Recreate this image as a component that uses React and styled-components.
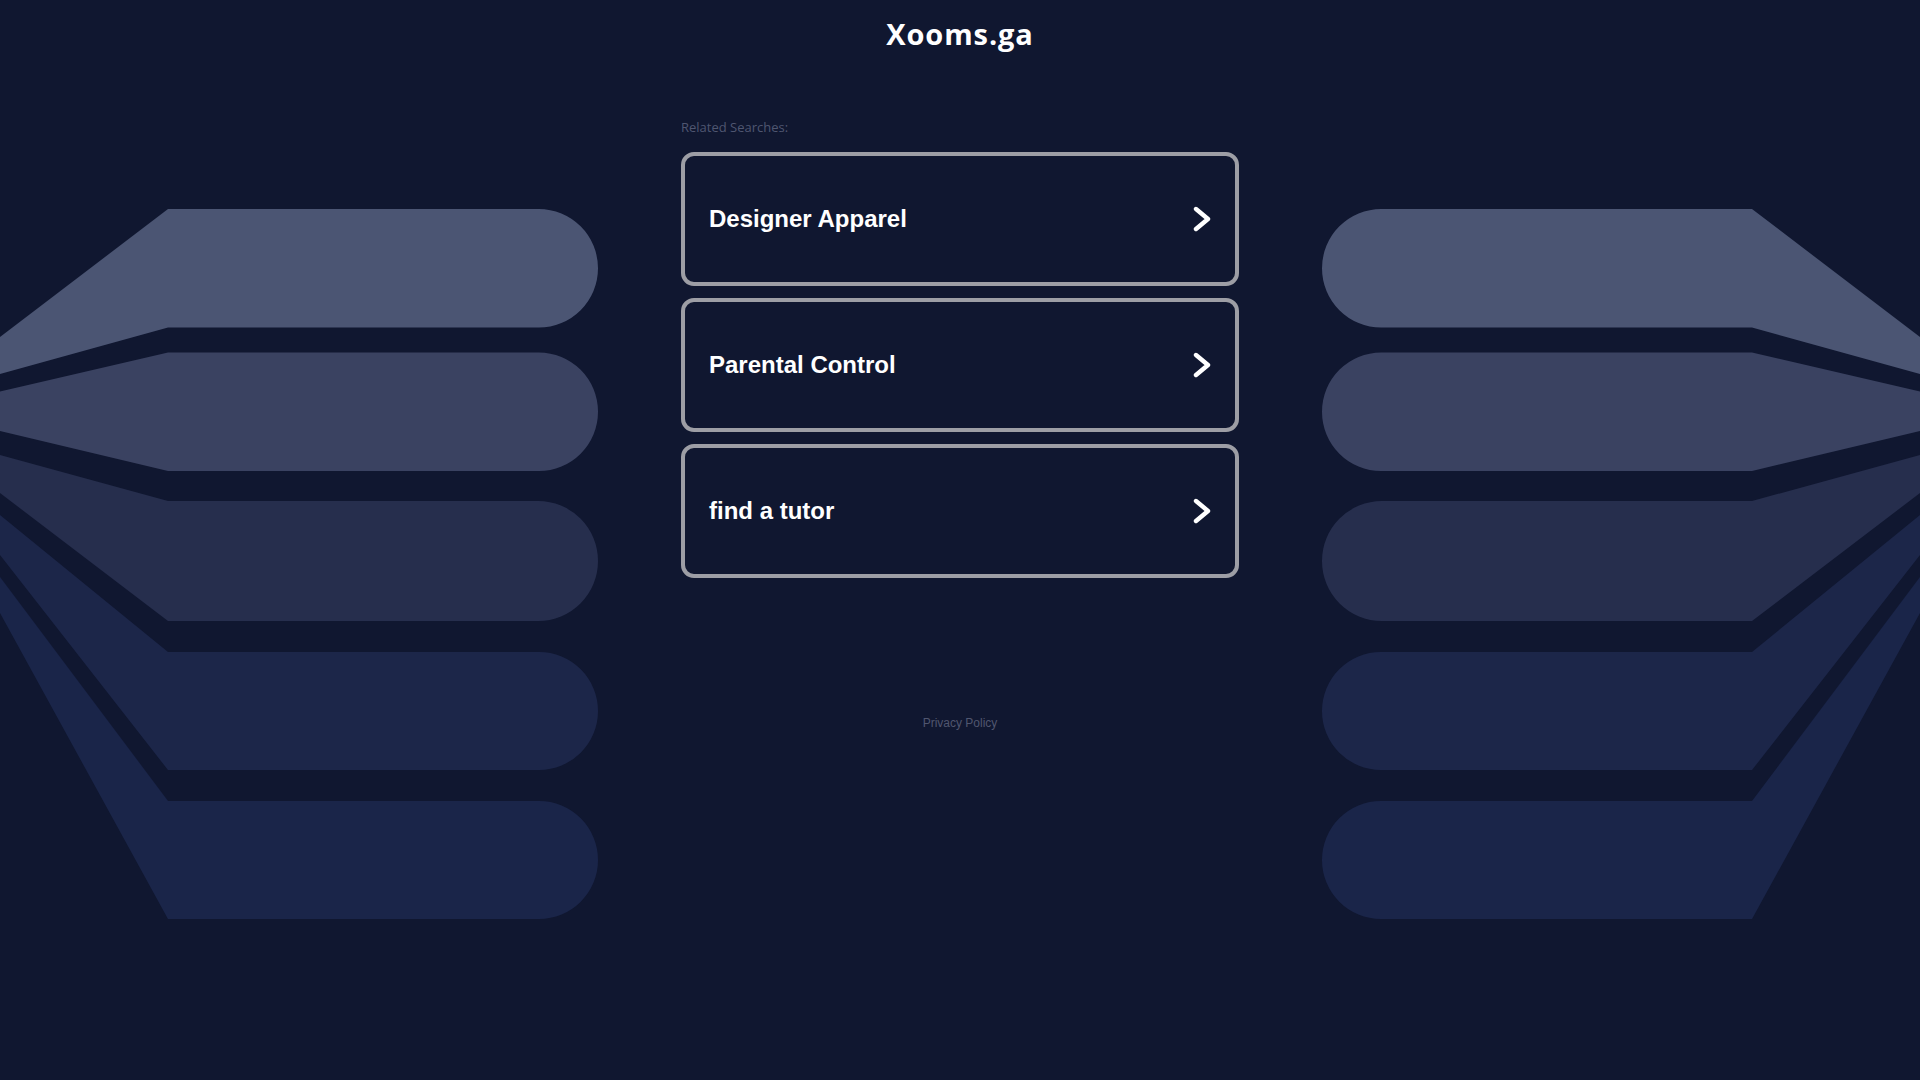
import React from "react";
import styled, { createGlobalStyle } from "styled-components";

const GlobalStyle = createGlobalStyle`
  html, body {
    margin: 0;
    padding: 0;
    background-color: #101730;
  }
  body {
    font-family: "Liberation Sans", Arial, sans-serif;
  }
`;

const Page = styled.div`
  display: flex;
  justify-content: center;
  width: 100%;
  min-height: 1080px;
  overflow: hidden;
`;

const Art = styled.svg`
  flex: 0 0 598px;
  width: 598px;
  height: 930px;
  display: block;
`;

const Main = styled.main`
  flex: 0 0 724px;
  box-sizing: border-box;
  padding: 0 83px;
  display: flex;
  flex-direction: column;
`;

const Title = styled.h1`
  margin: 14px 0 0;
  height: 40px;
  line-height: 40px;
  text-align: center;
  color: #ffffff;
  font-family: "Open Sans", sans-serif;
  font-weight: 700;
  font-size: 29px;
  letter-spacing: 0.9px;
`;

const Label = styled.div`
  margin-top: 64px;
  line-height: 18px;
  font-family: "Open Sans", sans-serif;
  font-size: 13px;
  color: #4f5670;
`;

const List = styled.div`
  margin-top: 16px;
  display: flex;
  flex-direction: column;
  gap: 12px;
`;

const Card = styled.a`
  box-sizing: border-box;
  height: 134px;
  display: flex;
  align-items: center;
  justify-content: space-between;
  padding: 0 24px 0 24px;
  border: 4px solid #9d9ea5;
  border-radius: 13px;
  color: #ffffff;
  text-decoration: none;
  font-family: "Liberation Sans", Arial, sans-serif;
  font-weight: 700;
  font-size: 24px;
  cursor: pointer;
`;

const Chevron = styled.svg`
  width: 18px;
  height: 26px;
  flex-shrink: 0;
`;

const Footer = styled.a`
  margin-top: 138px;
  text-align: center;
  line-height: 14px;
  font-family: "Liberation Sans", Arial, sans-serif;
  font-size: 12px;
  color: #50566f;
  text-decoration: none;
`;

const bands = [
  { top: 209, bottom: 327.6, edgeTop: 337, edgeBottom: 374, fill: "#4b5573" },
  { top: 352.5, bottom: 471, edgeTop: 391.5, edgeBottom: 431, fill: "#3a4261" },
  { top: 501, bottom: 621, edgeTop: 455, edgeBottom: 493, fill: "#262e4d" },
  { top: 652, bottom: 770, edgeTop: 515, edgeBottom: 555, fill: "#1c2649" },
  { top: 801, bottom: 919, edgeTop: 577, edgeBottom: 613, fill: "#1a2549" },
];

const searches = ["Designer Apparel", "Parental Control", "find a tutor"];

function bandPath(b) {
  const r = (b.bottom - b.top) / 2;
  const cx = 598 - r;
  return `M168,${b.top} H${cx} A${r},${r} 0 0 1 ${cx},${b.bottom} H168 L0,${b.edgeBottom} V${b.edgeTop} Z`;
}

function Side({ flip }) {
  return (
    <Art viewBox="0 0 598 930">
      <g transform={flip ? "translate(598,0) scale(-1,1)" : undefined}>
        {bands.map((b) => (
          <path key={b.top} d={bandPath(b)} fill={b.fill} />
        ))}
      </g>
    </Art>
  );
}

export default function App() {
  return (
    <>
      <GlobalStyle />
      <Page>
        <Side />
        <Main>
          <Title>Xooms.ga</Title>
          <Label>Related Searches:</Label>
          <List>
            {searches.map((s) => (
              <Card key={s}>
                <span>{s}</span>
                <Chevron viewBox="0 0 18 26">
                  <polyline
                    points="3,3 15,13 3,23"
                    fill="none"
                    stroke="#ffffff"
                    strokeWidth="4.4"
                    strokeLinecap="round"
                    strokeLinejoin="round"
                  />
                </Chevron>
              </Card>
            ))}
          </List>
          <Footer>Privacy Policy</Footer>
        </Main>
        <Side flip />
      </Page>
    </>
  );
}
